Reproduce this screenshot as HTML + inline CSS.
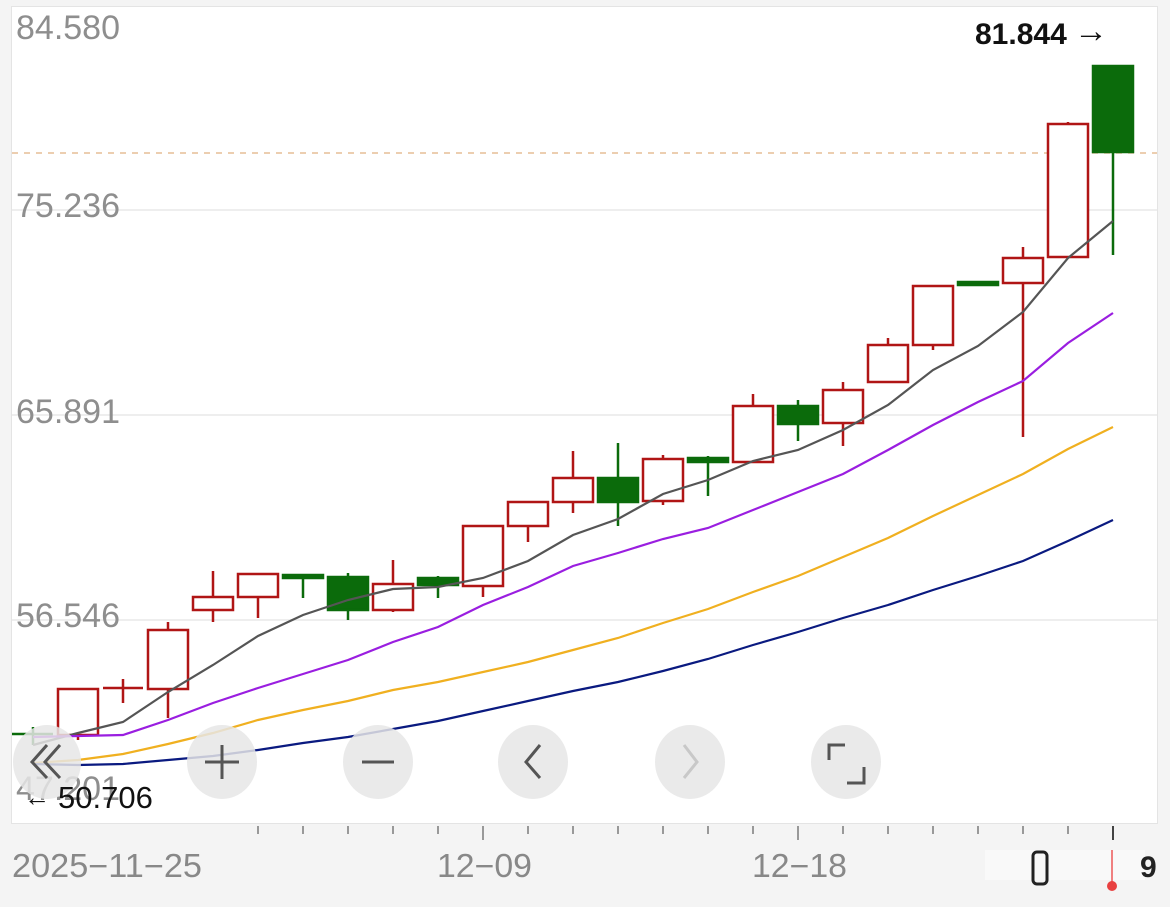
<!DOCTYPE html>
<html><head><meta charset="utf-8"><style>
html,body{margin:0;padding:0;width:1170px;height:907px;overflow:hidden;background:#f4f4f4;}
svg{display:block}
</style></head><body>
<svg width="1170" height="907" xmlns="http://www.w3.org/2000/svg" font-family="Liberation Sans, sans-serif">
<rect x="0" y="0" width="1170" height="907" fill="#f4f4f4"/>
<rect x="11.5" y="6.5" width="1146" height="817" fill="#fff" stroke="#e4e4e4"/>
<g stroke="#e8e8e8" stroke-width="1.5">
<line x1="12" y1="210" x2="1157" y2="210"/><line x1="12" y1="415" x2="1157" y2="415"/><line x1="12" y1="620" x2="1157" y2="620"/>
</g>
<line x1="12" y1="153" x2="1157" y2="153" stroke="#e0b080" stroke-width="1.2" stroke-dasharray="6,6"/>
<g fill="#8e8e8e" font-size="34">
<text x="16" y="39">84.580</text><text x="16" y="217">75.236</text><text x="16" y="423">65.891</text><text x="16" y="627">56.546</text><text x="16" y="800">47.201</text>
</g>
<g stroke-width="2.5">
<g stroke="#b01515" fill="#fff">
<line x1="78" y1="689" x2="78" y2="740"/><rect x="58" y="689" width="40" height="46"/>
<line x1="123" y1="679" x2="123" y2="703"/><line x1="103" y1="688" x2="143" y2="688"/>
<line x1="168" y1="622" x2="168" y2="718"/><rect x="148" y="630" width="40" height="59"/>
<line x1="213" y1="571" x2="213" y2="622"/><rect x="193" y="597" width="40" height="13"/>
<line x1="258" y1="573" x2="258" y2="618"/><rect x="238" y="574" width="40" height="23"/>
<line x1="393" y1="560" x2="393" y2="612"/><rect x="373" y="584" width="40" height="26"/>
<line x1="483" y1="526" x2="483" y2="597"/><rect x="463" y="526" width="40" height="60"/>
<line x1="528" y1="502" x2="528" y2="542"/><rect x="508" y="502" width="40" height="24"/>
<line x1="573" y1="451" x2="573" y2="513"/><rect x="553" y="478" width="40" height="24"/>
<line x1="663" y1="455" x2="663" y2="505"/><rect x="643" y="459" width="40" height="42"/>
<line x1="753" y1="394" x2="753" y2="462"/><rect x="733" y="406" width="40" height="56"/>
<line x1="843" y1="382" x2="843" y2="446"/><rect x="823" y="390" width="40" height="33"/>
<line x1="888" y1="338" x2="888" y2="382"/><rect x="868" y="345" width="40" height="37"/>
<line x1="933" y1="286" x2="933" y2="350"/><rect x="913" y="286" width="40" height="59"/>
<line x1="1023" y1="247" x2="1023" y2="437"/><rect x="1003" y="258" width="40" height="25"/>
<line x1="1068" y1="122" x2="1068" y2="257"/><rect x="1048" y="124" width="40" height="133"/>
</g>
<g stroke="#0b6b0b" fill="#0b6b0b">
<line x1="33" y1="727" x2="33" y2="745"/><line x1="12" y1="734" x2="53" y2="734"/>
<line x1="303" y1="575" x2="303" y2="598"/><rect x="283" y="575" width="40" height="3"/>
<line x1="348" y1="573" x2="348" y2="620"/><rect x="328" y="577" width="40" height="33"/>
<line x1="438" y1="576" x2="438" y2="598"/><rect x="418" y="578" width="40" height="7"/>
<line x1="618" y1="443" x2="618" y2="526"/><rect x="598" y="478" width="40" height="24"/>
<line x1="708" y1="456" x2="708" y2="496"/><rect x="688" y="458" width="40" height="4"/>
<line x1="798" y1="400" x2="798" y2="441"/><rect x="778" y="406" width="40" height="18"/>
<rect x="958" y="282" width="40" height="3"/>
<line x1="1113" y1="66" x2="1113" y2="255"/><rect x="1093" y="66" width="40" height="86"/>
</g>
</g>
<g fill="none" stroke-width="2.2">
<polyline stroke="#555" points="33,745 78,733 123,722 168,692 213,665 258,636 303,615 348,600 393,589 438,587 483,578 528,561 573,535 618,519 663,494 708,480 753,461 798,450 843,430 888,405 933,370 978,346 1023,312 1068,258 1113,221"/>
<polyline stroke="#9a1ee0" points="33,737 78,736 123,735 168,720 213,703 258,688 303,674 348,660 393,642 438,627 483,605 528,587 573,566 618,553 663,539 708,528 753,510 798,492 843,474 888,450 933,425 978,402 1023,381 1068,343 1113,313"/>
<polyline stroke="#f0b020" points="33,763 78,760 123,754 168,744 213,733 258,720 303,710 348,701 393,690 438,682 483,672 528,662 573,650 618,638 663,623 708,609 753,592 798,576 843,557 888,538 933,516 978,495 1023,474 1068,449 1113,427"/>
<polyline stroke="#0a1a80" points="33,764 78,765 123,764 168,760 213,756 258,750 303,743 348,737 393,729 438,721 483,711 528,701 573,691 618,682 663,671 708,659 753,645 798,632 843,618 888,605 933,590 978,576 1023,561 1068,541 1113,520"/>
</g>
<g fill="#e6e6e6" fill-opacity="0.85">
<ellipse cx="47" cy="762" rx="34" ry="37"/><ellipse cx="222" cy="762" rx="35" ry="37"/><ellipse cx="378" cy="762" rx="35" ry="37"/><ellipse cx="533" cy="762" rx="35" ry="37"/><ellipse cx="690" cy="762" rx="35" ry="37"/><ellipse cx="846" cy="762" rx="35" ry="37"/>
</g>
<g fill="none" stroke="#555" stroke-width="3">
<polyline points="47,745 32,762 47,778"/><polyline points="60,745 45,762 60,778"/>
<line x1="205" y1="762" x2="239" y2="762"/><line x1="222" y1="745" x2="222" y2="779"/>
<line x1="362" y1="762" x2="394" y2="762"/>
<polyline points="540,745 526,762 540,778"/>
<polyline points="829,760 829,745 845,745"/>
<polyline points="847,783 864,783 864,767"/>
</g>
<polyline points="684,745 697,762 684,778" fill="none" stroke="#c8c8c8" stroke-width="3"/>
<text x="975" y="44" font-size="30" font-weight="bold" fill="#111">81.844</text>
<text x="1074" y="42" font-size="34" fill="#111">→</text>
<text x="24" y="806" font-size="26" fill="#111">←</text>
<text x="58" y="808" font-size="31" fill="#111">50.706</text>
<g stroke="#999" stroke-width="2">
<line x1="258" y1="826" x2="258" y2="834"/><line x1="303" y1="826" x2="303" y2="834"/><line x1="348" y1="826" x2="348" y2="834"/><line x1="393" y1="826" x2="393" y2="834"/><line x1="438" y1="826" x2="438" y2="834"/>
<line x1="483" y1="826" x2="483" y2="840"/><line x1="528" y1="826" x2="528" y2="834"/><line x1="573" y1="826" x2="573" y2="834"/><line x1="618" y1="826" x2="618" y2="834"/><line x1="663" y1="826" x2="663" y2="834"/><line x1="708" y1="826" x2="708" y2="834"/><line x1="753" y1="826" x2="753" y2="834"/>
<line x1="798" y1="826" x2="798" y2="840"/><line x1="843" y1="826" x2="843" y2="834"/><line x1="888" y1="826" x2="888" y2="834"/><line x1="933" y1="826" x2="933" y2="834"/><line x1="978" y1="826" x2="978" y2="834"/><line x1="1023" y1="826" x2="1023" y2="834"/><line x1="1068" y1="826" x2="1068" y2="834"/>
<line x1="1113" y1="826" x2="1113" y2="840" stroke="#444"/>
</g>
<g fill="#888" font-size="33">
<text x="12" y="877" textLength="190" lengthAdjust="spacingAndGlyphs">2025−11−25</text><text x="437" y="877" textLength="95" lengthAdjust="spacingAndGlyphs">12−09</text><text x="752" y="877" textLength="95" lengthAdjust="spacingAndGlyphs">12−18</text>
</g>
<rect x="985" y="850" width="160" height="30" fill="#fafafa" opacity="0.8"/>
<rect x="1033" y="852" width="14" height="32" rx="4" fill="none" stroke="#222" stroke-width="3"/>
<line x1="1112" y1="850" x2="1112" y2="882" stroke="#f08080" stroke-width="2"/>
<circle cx="1112" cy="886" r="5" fill="#e84040"/>
<text x="1140" y="877" font-size="30" font-weight="bold" fill="#222">9</text>
</svg>
</body></html>
